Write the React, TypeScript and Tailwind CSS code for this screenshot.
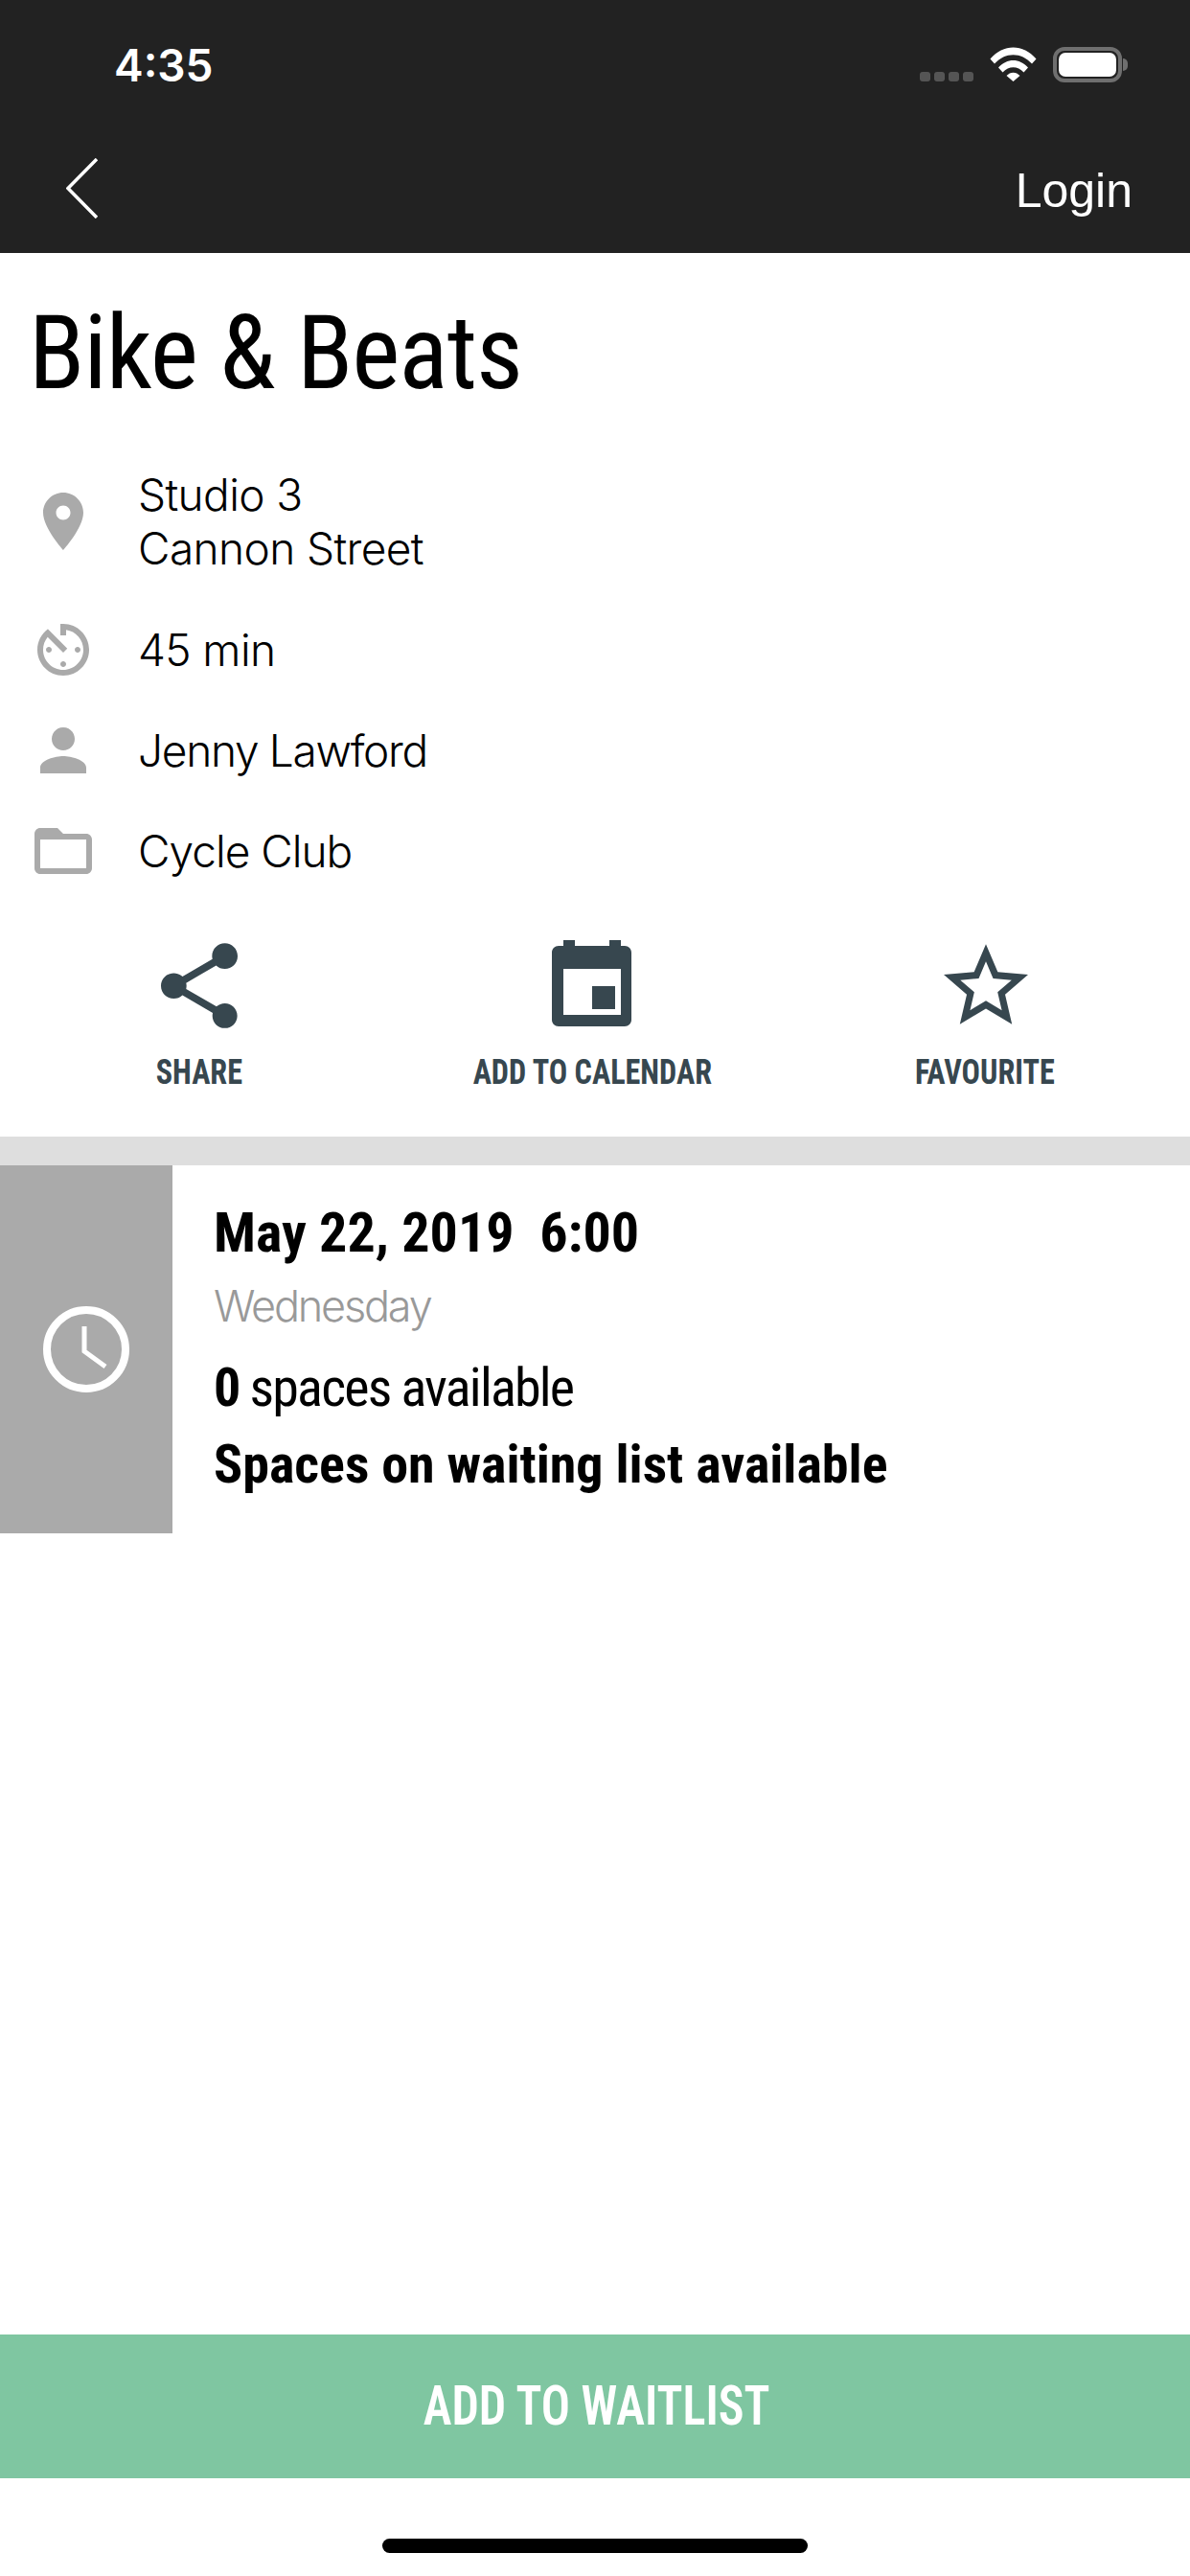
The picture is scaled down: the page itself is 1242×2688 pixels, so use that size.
import { ReactNode } from "react"

const narrow = "font-['Liberation_Sans_Narrow','Roboto_Condensed','Liberation_Sans',sans-serif]"
const light = "font-light font-['Inter','Liberation_Sans',sans-serif]"

function RowIcon({ d }: { d: string }) {
    return (
        <svg viewBox="0 0 24 24" className="w-[72px] h-[72px] fill-[#aaaaaa] shrink-0">
            <path d={d} />
        </svg>
    )
}

function InfoRow({ icon, children }: { icon: string, children: ReactNode }) {
    return (
        <div className="flex items-center h-[72px] mt-[33px]">
            <RowIcon d={icon} />
            <div className={`ml-[42px] text-[46px] leading-[56px] tracking-[-0.6px] text-black ${light}`}>
                {children}
            </div>
        </div>
    )
}

function Action({ label, children }: { label: string, children: ReactNode }) {
    return (
        <div className="flex flex-col items-center">
            <div className="h-[94px] flex items-center justify-center">{children}</div>
            <span className={`mt-[21px] text-[37px] leading-[44px] font-bold text-[#37474f] whitespace-nowrap scale-x-[0.87] ${narrow}`}>{label}</span>
        </div>
    )
}

export default function App() {
    return (
        <div className="w-[1242px] h-[2688px] flex flex-col bg-white overflow-hidden font-['Liberation_Sans',sans-serif]">
            <header className="h-[264px] bg-[#222222] shrink-0 flex flex-col text-white">
                <div className="h-[136px] flex items-start justify-between pl-[119px] pr-[65px] pt-[42px]">
                    <span className="text-[46px] leading-[52px] font-semibold font-['Inter',sans-serif]">4:35</span>
                    <div className="flex items-start mt-[7px]">
                        <div className="flex gap-[4px] mt-[26px]">
                            <span className="w-[11px] h-[10px] rounded-[3px] bg-[#555555]" />
                            <span className="w-[11px] h-[10px] rounded-[3px] bg-[#555555]" />
                            <span className="w-[11px] h-[10px] rounded-[3px] bg-[#555555]" />
                            <span className="w-[11px] h-[10px] rounded-[3px] bg-[#555555]" />
                        </div>
                        <svg viewBox="0 0 49 36" className="w-[49px] h-[36px] ml-[17px] fill-white">
                            <path d="M0.5 12.5 C14 -3.5 35 -3.5 48.5 12.5 L44 17.5 C33 5 16 5 5 17.5 Z" />
                            <path d="M9 21.5 C18 11.5 31 11.5 40 21.5 L35.5 26.5 C29 19.5 20 19.5 13.5 26.5 Z" />
                            <path d="M17.5 30 C21.5 25.5 27.5 25.5 31.5 30 L24.5 36 Z" />
                        </svg>
                        <div className="ml-[17px] flex items-center">
                            <div className="w-[72px] h-[37px] rounded-[12px] border-[4px] border-[#6f6f6f] p-[2px]">
                                <div className="w-full h-full rounded-[7px] bg-white" />
                            </div>
                            <span className="w-[5px] h-[13px] ml-[1px] rounded-r-[5px] bg-[#6f6f6f]" />
                        </div>
                    </div>
                </div>
                <div className="flex-1 flex items-start justify-between pl-[69px] pr-[60px]">
                    <svg viewBox="0 0 33 63" className="w-[33px] h-[63px] mt-[29px] fill-none stroke-white stroke-[3.5]">
                        <path d="M32 1 L2 31.5 L32 62" />
                    </svg>
                    <span className="text-[50px] leading-[58px] mt-[34px]">Login</span>
                </div>
            </header>

            <h1 className={`pl-[30px] pt-[45px] h-[160px] shrink-0 text-[107px] leading-[120px] tracking-[-1.1px] text-black ${narrow}`}>Bike &amp; Beats</h1>

            <div className="pl-[30px] mt-[64px] flex flex-col">
                <div className="flex items-center h-[112px] mb-[9px]">
                    <RowIcon d="M12 2C8.13 2 5 5.13 5 9c0 5.25 7 13 7 13s7-7.75 7-13c0-3.87-3.13-7-7-7zm0 9.5c-1.38 0-2.5-1.12-2.5-2.5s1.12-2.5 2.5-2.5 2.5 1.12 2.5 2.5-1.12 2.5-2.5 2.5z" />
                    <div className={`ml-[42px] text-[46px] leading-[56px] tracking-[-0.6px] text-black ${light}`}>
                        <div>Studio 3</div>
                        <div>Cannon Street</div>
                    </div>
                </div>
                <InfoRow icon="M11 17c0 .55.45 1 1 1s1-.45 1-1-.45-1-1-1-1 .45-1 1zm0-14v4h2V5.08c3.39.49 6 3.39 6 6.92 0 3.87-3.13 7-7 7s-7-3.13-7-7c0-1.68.59-3.22 1.58-4.42L12 13l1.41-1.41-6.8-6.8v.02C4.42 6.45 3 9.05 3 12c0 4.97 4.02 9 9 9 4.97 0 9-4.03 9-9s-4.03-9-9-9h-1zm7 9c0-.55-.45-1-1-1s-1 .45-1 1 .45 1 1 1 1-.45 1-1zM6 12c0 .55.45 1 1 1s1-.45 1-1-.45-1-1-1-1 .45-1 1z">45 min</InfoRow>
                <InfoRow icon="M12 12c2.21 0 4-1.79 4-4s-1.79-4-4-4-4 1.79-4 4 1.79 4 4 4zm0 2c-2.67 0-8 1.34-8 4v2h16v-2c0-2.66-5.33-4-8-4z"><span className="tracking-[-1.3px]">Jenny Lawford</span></InfoRow>
                <InfoRow icon="M20 6h-8l-2-2H4c-1.1 0-1.99.9-1.99 2L2 18c0 1.1.9 2 2 2h16c1.1 0 2-.9 2-2V8c0-1.1-.9-2-2-2zm0 12H4V8h16v10z"><span className="tracking-[-1px]">Cycle Club</span></InfoRow>
            </div>

            <div className="grid grid-cols-3 pl-[3px] pr-[9px] mt-[58px]">
                <Action label="SHARE">
                    <svg viewBox="3 2 18 20.1" className="w-[80px] h-[90px] fill-[#37474f]">
                        <path d="M18 16.08c-.76 0-1.44.3-1.96.77L8.91 12.7c.05-.23.09-.46.09-.7s-.04-.47-.09-.7l7.05-4.11c.54.5 1.25.81 2.04.81 1.66 0 3-1.34 3-3s-1.34-3-3-3-3 1.34-3 3c0 .24.04.47.09.7L8.04 9.81C7.5 9.31 6.79 9 6 9c-1.66 0-3 1.34-3 3s1.34 3 3 3c.79 0 1.5-.31 2.04-.81l7.12 4.16c-.05.21-.08.43-.08.65 0 1.61 1.31 2.92 2.92 2.92 1.61 0 2.92-1.31 2.92-2.92s-1.31-2.92-2.92-2.92z" />
                    </svg>
                </Action>
                <Action label="ADD TO CALENDAR">
                    <svg viewBox="0 0 83 90" className="w-[83px] h-[90px] mb-[6px] mr-[2px] fill-[#37474f]">
                        <path fillRule="evenodd" d="M12 0h12v6h36V0h12v6h4c4 0 7 3 7 7v70c0 4-3 7-7 7H7c-4 0-7-3-7-7V13c0-4 3-7 7-7h5zM12 30v48h60V30zM42 48h24v24H42z" />
                    </svg>
                </Action>
                <Action label="FAVOURITE">
                    <svg viewBox="2 2 20 19" className="w-[88px] h-[84px] mb-[4px] ml-[2px] fill-[#37474f]">
                        <path d="M22 9.24l-7.19-.62L12 2 9.19 8.63 2 9.24l5.46 4.73L5.82 21 12 17.27 18.18 21l-1.63-7.03L22 9.24zM12 15.4l-3.76 2.27 1-4.28-3.32-2.88 4.38-.38L12 6.1l1.71 4.04 4.38.38-3.32 2.88 1 4.28L12 15.4z" />
                    </svg>
                </Action>
            </div>

            <div className="h-[30px] bg-[#dedede] mt-[45px] shrink-0" />

            <section className="flex h-[384px] shrink-0">
                <div className="w-[180px] bg-[#aaaaaa] flex items-center justify-center">
                    <svg viewBox="0 0 90 90" className="w-[90px] h-[90px] fill-none stroke-white">
                        <circle cx="45" cy="45" r="41" strokeWidth="8" />
                        <path d="M43 21 L43 47 L65 63" strokeWidth="5" />
                    </svg>
                </div>
                <div className={`pl-[43px] pt-[36px] text-black ${narrow}`}>
                    <div className="text-[58px] leading-[68px] font-bold whitespace-pre">May 22, 2019  6:00</div>
                    <div className={`mt-[17px] text-[45px] leading-[52px] tracking-[-2.2px] text-[#999999] ${light}`}>Wednesday</div>
                    <div className="mt-[26px] text-[56px] leading-[66px] tracking-[-1.8px]"><span className="font-bold">0</span> spaces available</div>
                    <div className="mt-[14px] text-[56px] leading-[66px] font-bold">Spaces on waiting list available</div>
                </div>
            </section>

            <div className="flex-1" />

            <button className="h-[150px] shrink-0 bg-[#7fc6a1] text-white flex items-center justify-center pl-[3px]">
                <span className={`text-[57px] font-semibold whitespace-nowrap scale-x-[0.88] ${narrow}`}>ADD TO WAITLIST</span>
            </button>

            <div className="h-[102px] shrink-0 flex justify-center pt-[63px]">
                <div className="w-[444px] h-[15px] rounded-full bg-black" />
            </div>
        </div>
    )
}
